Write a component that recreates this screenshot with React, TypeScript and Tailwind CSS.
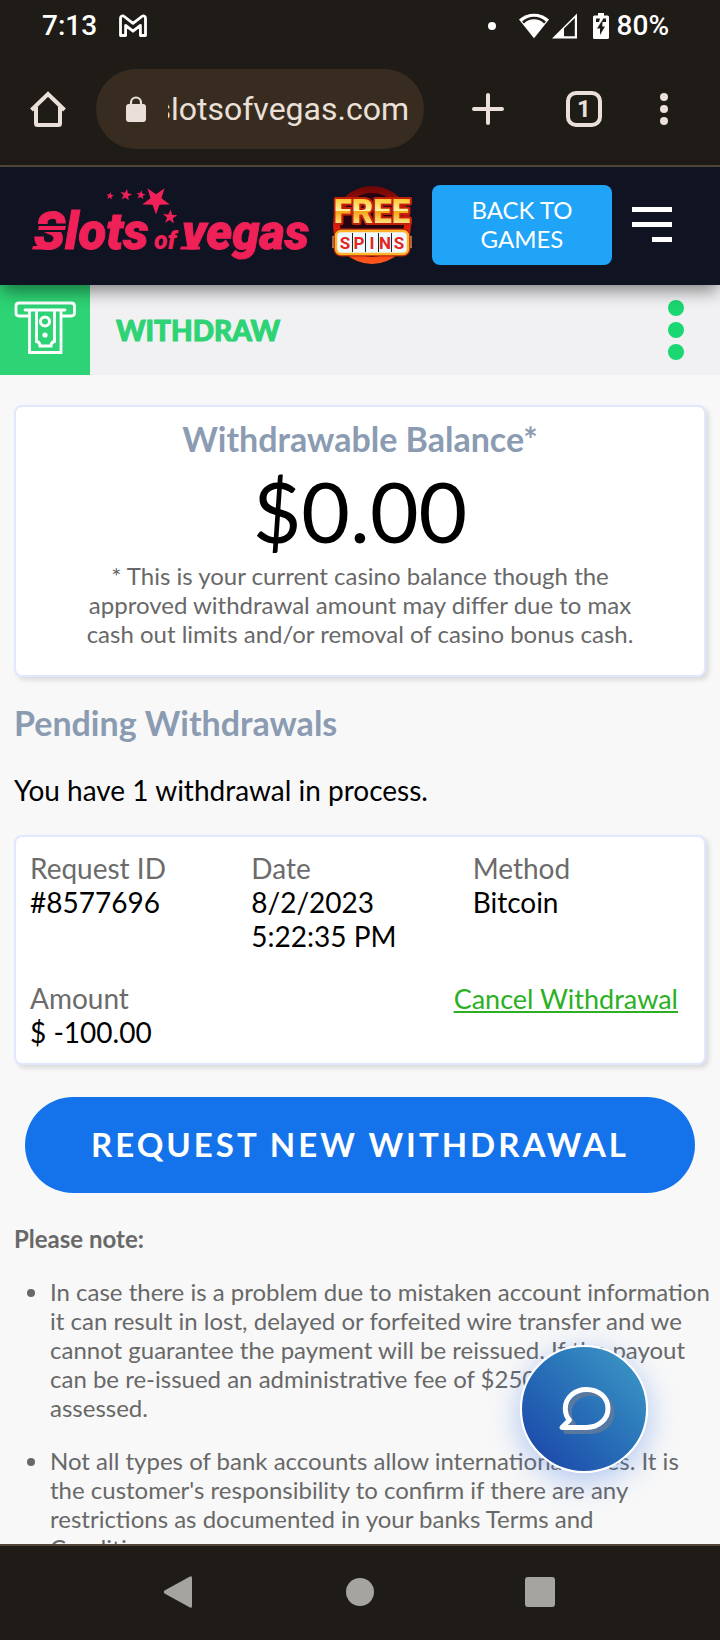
import React from 'react';

interface Field {
  label: string;
  value: string;
}

const requestFields: Field[] = [
  { label: 'Request ID', value: '#8577696' },
  { label: 'Date', value: '8/2/2023 5:22:35 PM' },
  { label: 'Method', value: 'Bitcoin' },
];

const notes: string[] = [
  'In case there is a problem due to mistaken account information it can result in lost, delayed or forfeited wire transfer and we cannot guarantee the payment will be reissued. If the payout can be re-issued an administrative fee of $250 will be assessed.',
  "Not all types of bank accounts allow international wires. It is the customer's responsibility to confirm if there are any restrictions as documented in your banks Terms and Conditions.",
];

const StatusBar = () => (
  <div className="flex h-[52px] shrink-0 items-center justify-between pl-[42px] pr-[51px] text-[28px] font-medium text-white">
    <div className="flex items-center gap-[21px]">
      <span>7:13</span>
      <svg width="30" height="24" viewBox="0 0 30 24" fill="none" stroke="currentColor" strokeWidth="2.8" strokeLinejoin="round">
        <path d="M2.5 21.5V4.2C2.5 1.8 4.8 1.4 6.2 2.5L15 9.4L23.8 2.5C25.200 1.400 27.500 1.800 27.500 4.200V21.500H22.400V11.400L15 17.200L7.600 11.400V21.500Z" />
      </svg>
    </div>
    <div className="flex items-center">
      <span className="mr-[23px] h-2 w-2 rounded-full bg-white" />
      <svg className="mr-[3px]" width="30" height="26" viewBox="0 0 30 26">
        <path d="M0 6.5C4.2 2.8 9.4.8 15 .8S25.800 2.800 30 6.500L15 25.200Z" fill="#fff" />
        <path d="M4 9.500C7 6.600 10.800 5 15 5S23 6.600 26 9.500" fill="none" stroke="#1f1c17" strokeWidth="2.600" />
      </svg>
      <svg className="mr-4" width="25" height="26" viewBox="0 0 25 26">
        <path d="M0 25.500L25 .5V25.500Z" fill="#fff" />
        <path d="M12 15.500L22.800 5V23.200H12Z" fill="#1f1c17" />
      </svg>
      <svg className="mr-2" width="16" height="26" viewBox="0 0 16 26">
        <path d="M5 0H11V2.500H14.500Q16 2.500 16 4V24.500Q16 26 14.500 26H1.500Q0 26 0 24.500V4Q0 2.500 1.500 2.500H5Z" fill="#fff" />
        <path d="M3 5.500H7L6 9H3ZM10 5.500H13V9H9Z" fill="#1f1c17" />
        <path d="M9.500 7L4 15.500H7V22L12 13.500H9.300Z" fill="#1f1c17" />
      </svg>
      <span>80%</span>
    </div>
  </div>
);

const BrowserToolbar = () => (
  <div className="flex h-[115px] shrink-0 items-center border-b-2 border-[#53473a] pr-6 text-[#ebe0d9]">
    <button type="button" aria-label="Home" className="flex w-24 justify-center">
      <svg width="36" height="36" viewBox="0 0 36 36" fill="none" stroke="currentColor" strokeWidth="4">
        <path d="M1.500 19L18 3L34.500 19" />
        <path d="M6 16V32.500Q6 34 7.500 34H28.500Q30 34 30 32.500V16" />
      </svg>
    </button>
    <div className="mr-4 flex h-20 min-w-0 flex-1 items-center rounded-full bg-[#382c20] pl-[30px] pr-[15px]">
      <svg className="mr-[22px] shrink-0" width="20" height="26" viewBox="0 0 20 26">
        <path d="M5 10V6.500A5 5 0 0 1 15 6.500V10" fill="none" stroke="currentColor" strokeWidth="2.200" />
        <rect y="8" width="20" height="18" rx="3" fill="currentColor" />
      </svg>
      <input
        type="text"
        dir="rtl"
        aria-label="Address"
        defaultValue="slotsofvegas.com"
        className="w-full min-w-0 flex-1 bg-transparent text-[32px] outline-none"
      />
    </div>
    <button type="button" aria-label="New tab" className="flex w-24 justify-center">
      <svg width="32" height="32" viewBox="0 0 32 32" stroke="currentColor" strokeWidth="4" strokeLinecap="round">
        <path d="M2 16H30M16 2V30" />
      </svg>
    </button>
    <button type="button" aria-label="Tabs" className="flex w-24 justify-center">
      <span className="flex h-9 w-9 items-center justify-center rounded-[10px] border-4 border-current text-2xl font-bold">1</span>
    </button>
    <button type="button" aria-label="More" className="flex w-16 flex-col items-center gap-1">
      <span className="h-2 w-2 rounded-full bg-current" />
      <span className="h-2 w-2 rounded-full bg-current" />
      <span className="h-2 w-2 rounded-full bg-current" />
    </button>
  </div>
);

const star = 'M0 -10L2.400 -3.200L9.500 -3.100L3.800 1.200L5.900 8.100L0 4L-5.900 8.100L-3.800 1.200L-9.500 -3.100L-2.400 -3.200Z';

const Logo = () => (
  <svg
    width="280"
    height="80"
    viewBox="0 0 280 80"
    fill="#f02158"
    className="shrink-0 font-['Roboto',sans-serif] font-black italic"
  >
    <path d={star} transform="translate(78 11) scale(.4) rotate(8)" />
    <path d={star} transform="translate(94 10) scale(.62) rotate(10)" />
    <path d={star} transform="translate(109 10) scale(.48) rotate(8)" />
    <path d={star} transform="translate(124 15) scale(1.450) rotate(180)" />
    <path d={star} transform="translate(138 32) scale(.75) rotate(5)" />
    <text x="2" y="64" fontSize="51" stroke="#f02158" strokeWidth="1">Slots</text>
    <text x="122" y="64" fontSize="25">of</text>
    <text x="150" y="64" fontSize="49" stroke="#f02158" strokeWidth="1">vegas</text>
    {/* wing across the S and the rules at the baseline */}
    <path d="M4 39H33V41H4ZM4 45H33V47H4Z" fill="#101321" />
    <path d="M7 41H34L33 45H6Z" />
    <path d="M1 61H18L16 64.500H0Z" />
    <path d="M149 61.500H168V64.500H148Z" />
  </svg>
);

const FreeSpins = () => (
  <svg width="80" height="80" viewBox="0 0 80 80" className="font-['Roboto',sans-serif] font-black">
    <defs>
      <linearGradient id="ring" x1="0" y1="0" x2="0" y2="1">
        <stop offset="0" stopColor="#6b0606" />
        <stop offset=".5" stopColor="#e01808" />
        <stop offset="1" stopColor="#ff5a1c" />
      </linearGradient>
      <linearGradient id="gold" x1="0" y1="12" x2="0" y2="39" gradientUnits="userSpaceOnUse">
        <stop offset="0" stopColor="#ffc21a" />
        <stop offset=".5" stopColor="#fff0a8" />
        <stop offset=".54" stopColor="#f5a312" />
        <stop offset="1" stopColor="#ffe98a" />
      </linearGradient>
    </defs>
    <circle cx="40" cy="40" r="39" fill="url(#ring)" />
    <circle cx="40" cy="40" r="32" fill="#250310" />
    <text x="40" y="38" textAnchor="middle" fontSize="33" fill="url(#gold)" stroke="#c3200c" strokeWidth="4" strokeLinejoin="round" paintOrder="stroke">FREE</text>
    <path d="M1 51L6 57L1 63ZM79 51L74 57L79 63Z" fill="#f04a1c" stroke="#ffd27a" />
    <rect x="4" y="46" width="72" height="23" rx="5" fill="#effaff" stroke="#b3200c" strokeWidth="5" />
    <rect x="4" y="46" width="72" height="23" rx="5" fill="#effaff" stroke="#ffb429" strokeWidth="2.500" />
    <path d="M20.500 48V67M33.500 48V67M46.500 48V67M59.500 48V67" stroke="#222" />
    <g fontSize="17" fill="#e3251d" textAnchor="middle" className="font-bold">
      <text x="13" y="64">S</text>
      <text x="27" y="64">P</text>
      <text x="40" y="64">I</text>
      <text x="53" y="64">N</text>
      <text x="67" y="64">S</text>
    </g>
  </svg>
);

const SiteHeader = () => (
  <header className="relative z-10 flex h-[118px] shrink-0 items-center gap-5 bg-[#101321] pb-0.5 pl-8 pr-12 shadow-[0_8px_16px_-2px_rgba(0,0,0,0.45)]">
    <a href="#home" aria-label="Slots of Vegas" className="mr-auto">
      <Logo />
    </a>
    <a href="#free-spins" aria-label="Free spins">
      <FreeSpins />
    </a>
    <button type="button" className="h-20 w-[180px] rounded-lg bg-[#1fa4f8] px-8 pb-0.5 text-2xl leading-[29px] text-white">
      BACK TO GAMES
    </button>
    <button type="button" aria-label="Menu" className="flex w-10 flex-col items-end gap-2.5 pb-0.5">
      <span className="h-[5px] w-full bg-white" />
      <span className="h-[5px] w-full bg-white" />
      <span className="h-[5px] w-5 bg-white" />
    </button>
  </header>
);

const SectionBar = () => (
  <div className="flex h-[90px] items-center bg-[#f1f1f3] pr-9">
    <div className="h-[90px] w-[90px] bg-[#2dd374]">
      <svg width="90" height="90" viewBox="0 0 90 90" fill="none" stroke="#fff" strokeWidth="2.800">
        <path d="M28 31H19Q16 31 16 28V21Q16 18 19 18H71Q74.500 18 74.500 21V28Q74.500 31 71 31H62" />
        <path d="M25 25H65" strokeLinecap="round" />
        <path d="M29.500 25V67.500H61V25" />
        <path d="M36.500 25V56.500Q40 57 40 61H51Q51 57 54.500 56.500V25" />
        <circle cx="45" cy="36.500" r="4.500" strokeWidth="3" />
        <circle cx="45" cy="50" r="1.200" />
      </svg>
    </div>
    <h1 className="ml-[26px] flex-1 text-[28px] font-black text-[#2dd374] [-webkit-text-stroke:1px_#2dd374]">WITHDRAW</h1>
    <button type="button" aria-label="Options" className="flex flex-col gap-1.5">
      <span className="h-4 w-4 rounded-full bg-[#1bd771]" />
      <span className="h-4 w-4 rounded-full bg-[#1bd771]" />
      <span className="h-4 w-4 rounded-full bg-[#1bd771]" />
    </button>
  </div>
);

const BalanceCard = () => (
  <section className="rounded-lg border-2 border-[#e0e7ff] bg-white px-[60px] pb-[27px] pt-2.5 text-center shadow-[3px_3px_5px_rgba(0,0,0,0.12)]">
    <h2 className="text-[34px] font-bold leading-[44px] text-[#8a9bb2]">Withdrawable Balance*</h2>
    <p className="text-[84px] leading-[100px] text-black">$0.00</p>
    <p className="text-2xl leading-[29px] text-[#686868]">
      * This is your current casino balance though the approved withdrawal amount may differ due to max cash out limits
      and/or removal of casino bonus cash.
    </p>
  </section>
);

const RequestCard = () => (
  <section className="mt-7 grid grid-cols-3 gap-y-7 rounded-lg border-2 border-[#e0e7ff] bg-white py-3.5 pl-3.5 pr-2.5 text-[28px] leading-[34px] shadow-[3px_3px_5px_rgba(0,0,0,0.12)]">
    {requestFields.map((field) => (
      <div key={field.label} className="pr-14">
        <div className="whitespace-nowrap text-[#6b6b6b]">{field.label}</div>
        <div className="text-black">{field.value}</div>
      </div>
    ))}
    <div>
      <div className="text-[#6b6b6b]">Amount</div>
      <div className="text-black">$ -100.00</div>
    </div>
    <div className="col-span-2 pr-4 text-right">
      <a href="#cancel" className="text-[27px] text-[#2bb024] underline">Cancel Withdrawal</a>
    </div>
  </section>
);

const ChatButton = () => (
  <button
    type="button"
    aria-label="Chat"
    className="absolute bottom-[71px] right-[72px] flex h-32 w-32 items-center justify-center rounded-full border-2 border-white bg-linear-to-tr from-[#1c3fa6] to-[#3f9cc6] shadow-[0_8px_32px_rgba(60,120,230,0.4)]"
  >
    <svg className="overflow-visible" width="56" height="50" viewBox="0 0 56 50" fill="none" strokeWidth="5" strokeLinejoin="round">
      <path d="M6 43.500H30.500C43 43.500 52 35 52 24.500C52 13.500 43 5.500 30.500 5.500C19 5.500 9.300 13.500 9.300 24.500C9.300 29 10.500 33 13.500 36Z" stroke="#5878a0" transform="translate(4 4)" />
      <path d="M6 43.500H30.500C43 43.500 52 35 52 24.500C52 13.500 43 5.500 30.500 5.500C19 5.500 9.300 13.500 9.300 24.500C9.300 29 10.500 33 13.500 36Z" stroke="#fff" />
    </svg>
  </button>
);

const NavigationBar = () => (
  <nav className="flex h-24 shrink-0 items-center justify-center border-t-2 border-[#53473a] pb-0.5 text-[#a6a4a1]">
    <button type="button" aria-label="Back" className="flex w-[180px] justify-center">
      <svg width="34" height="34" viewBox="0 0 34 34" fill="currentColor">
        <path d="M27 1.500Q29 .5 29 3V31Q29 33.500 27 32.500L1.500 18.500Q0 17 1.500 15.500Z" />
      </svg>
    </button>
    <button type="button" aria-label="Home screen" className="flex w-[180px] justify-center">
      <span className="h-7 w-7 rounded-full bg-current" />
    </button>
    <button type="button" aria-label="Recent apps" className="flex w-[180px] justify-center">
      <span className="h-[30px] w-[30px] rounded-[3px] bg-current" />
    </button>
  </nav>
);

const App: React.FC = () => {
  return (
    <div className="flex h-screen flex-col bg-[#1f1c17] font-['Roboto',sans-serif]">
      <StatusBar />
      <BrowserToolbar />

      <div className="relative flex min-h-0 flex-1 flex-col bg-[#f8f8f8] font-['Lato',sans-serif]">
        <SiteHeader />
        <div className="min-h-0 flex-1 overflow-y-auto [scrollbar-width:none]">
          <SectionBar />
          <main className="px-3.5 pt-[30px]">
            <BalanceCard />

            <h2 className="mt-6 text-[34px] font-bold leading-[44px] text-[#8a9bb2]">Pending Withdrawals</h2>
            <p className="mt-7 text-[28px] leading-[34px] text-black">You have 1 withdrawal in process.</p>
            <RequestCard />

            <div className="mt-8 px-[11px]">
              <button type="button" className="h-24 w-full rounded-full bg-[#1473eb] text-[33px] font-bold tracking-[3px] text-white">
                REQUEST NEW WITHDRAWAL
              </button>
            </div>

            <div className="mt-[31px] text-2xl leading-[29px] text-[#686868]">
              <p className="font-bold">Please note:</p>
              <ul className="-mr-1.5 mt-6 list-disc space-y-6 pl-9">
                {notes.map((note) => (
                  <li key={note}>{note}</li>
                ))}
              </ul>
            </div>
          </main>
        </div>
        <ChatButton />
      </div>

      <NavigationBar />
    </div>
  );
};

export default App;
